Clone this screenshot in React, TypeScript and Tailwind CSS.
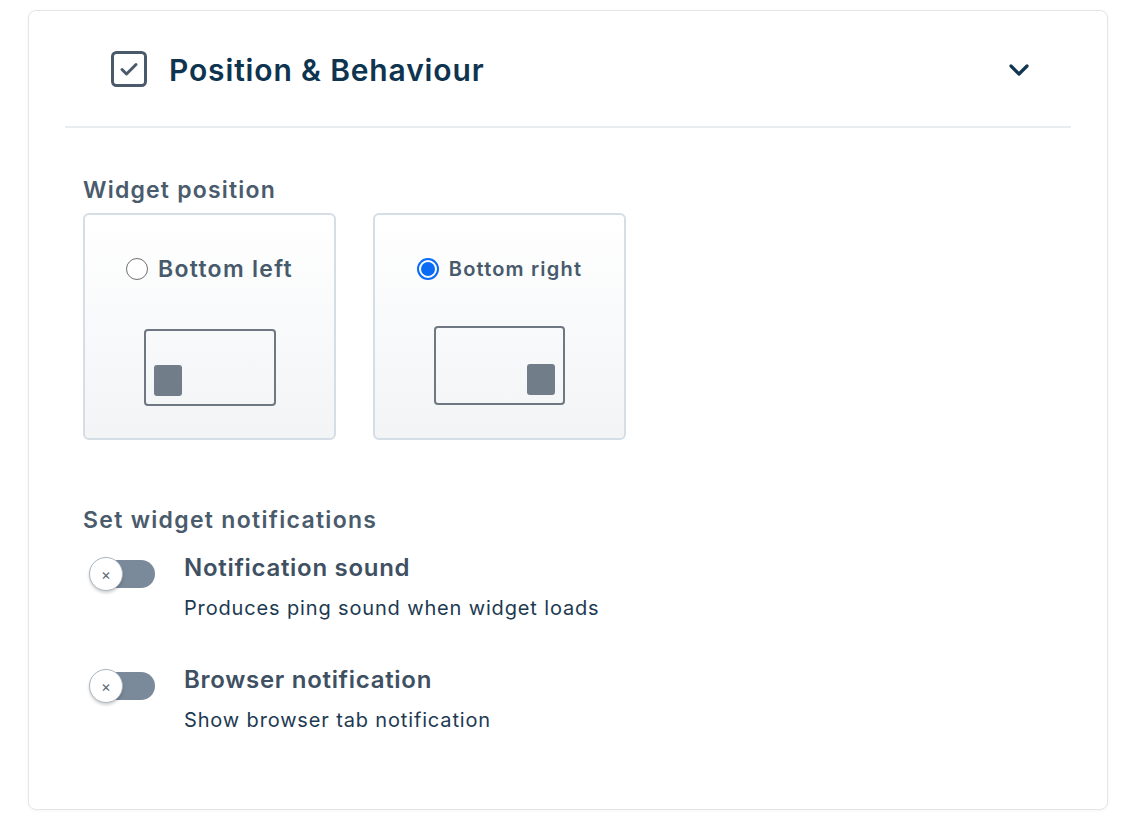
import { useState } from "react";

type Position = "left" | "right";

function CheckboxIcon() {
  return (
    <svg width="36" height="36" viewBox="0 0 36 36" fill="none">
      <rect x="1.5" y="1.5" width="33" height="33" rx="4" stroke="#4a5a6b" strokeWidth="3" />
      <path d="M11 18.5l4.5 4.5 9.5-9.5" stroke="#4a5a6b" strokeWidth="3" strokeLinecap="round" strokeLinejoin="round" />
    </svg>
  );
}

function Chevron() {
  return (
    <svg width="20" height="12" viewBox="0 0 20 12" fill="none">
      <path d="M2 2l8 8 8-8" stroke="#12364f" strokeWidth="3.2" strokeLinecap="round" strokeLinejoin="round" />
    </svg>
  );
}

function PositionCard({
  label,
  side,
  selected,
  onSelect,
  big,
}: {
  label: string;
  side: Position;
  selected: boolean;
  onSelect: () => void;
  big?: boolean;
}) {
  return (
    <button
      onClick={onSelect}
      className="flex h-[227px] w-[253px] flex-col items-center rounded-[6px] border-2 border-[#d5dde5] bg-gradient-to-b from-white to-[#f2f4f6] pt-[40px]"
    >
      <div className="flex items-center gap-[10px]">
        {selected ? (
          <span className="flex h-[22px] w-[22px] items-center justify-center rounded-full border-2 border-[#0a6cf5]">
            <span className="h-[14px] w-[14px] rounded-full bg-[#0a6cf5]" />
          </span>
        ) : (
          <span className="h-[22px] w-[22px] rounded-full border-[1.5px] border-[#6f6f6f] bg-white" />
        )}
        <span
          className={
            big
              ? "text-[23px] leading-[28px] font-semibold tracking-[1.3px] text-[#475a6c]"
              : "text-[20px] leading-[28px] font-semibold tracking-[1.2px] text-[#475a6c]"
          }
        >
          {label}
        </span>
      </div>
      <div
        className={
          side === "left"
            ? "mt-[46px] flex h-[77px] w-[132px] items-end justify-start rounded-[4px] border-2 border-[#6e7782] p-[8px]"
            : "mt-[43px] flex h-[79px] w-[131px] items-end justify-end rounded-[4px] border-2 border-[#6e7782] p-[8px]"
        }
      >
        <div className="h-[31px] w-[28px] rounded-[3px] bg-[#717e8a]" />
      </div>
    </button>
  );
}

function Toggle() {
  return (
    <div className="relative h-[34px] w-[66px] shrink-0">
      <div className="absolute left-[10px] top-[3px] h-[28px] w-[56px] rounded-full bg-[#7a8a9b]" />
      <div className="absolute left-0 top-0 flex h-[34px] w-[34px] items-center justify-center rounded-full border border-[#aab6c2] bg-white shadow-[0_2px_3px_rgba(0,0,0,0.18)]">
        <span className="text-[15px] leading-none text-[#5c6b7a]">×</span>
      </div>
    </div>
  );
}

function NotificationRow({ title, text }: { title: string; text: string }) {
  return (
    <div className="flex items-start">
      <div className="ml-[6px] mt-[3px]">
        <Toggle />
      </div>
      <div className="ml-[29px]">
        <p className="text-[24px] font-semibold leading-[28px] tracking-[0.7px] text-[#3f5063]">{title}</p>
        <p className="mt-[14px] text-[20px] leading-[24px] tracking-[0.85px] text-[#1d3a52]">{text}</p>
      </div>
    </div>
  );
}

export default function App() {
  const [position, setPosition] = useState<Position>("right");

  return (
    <div className="min-h-screen bg-white pl-[28px] pt-[10px] font-['Inter','Noto_Sans',sans-serif]">
      <section className="h-[800px] w-[1080px] rounded-[8px] border border-[#e3e6e8] bg-white shadow-[0_1px_4px_rgba(0,0,0,0.04)]">
        <div className="mx-[36px] flex h-[117px] items-center border-b-2 border-[#e8ecef] pl-[46px] pr-[42px]">
          <CheckboxIcon />
          <h2 className="ml-[22px] mt-[3px] text-[30px] font-semibold tracking-[0.85px] text-[#0f3450]">Position &amp; Behaviour</h2>
          <div className="ml-auto mt-[2px]">
            <Chevron />
          </div>
        </div>

        <div className="px-[54px] pt-[48px]">
          <h3 className="text-[23px] font-semibold leading-[28px] tracking-[1.2px] text-[#4a5b6c]">Widget position</h3>
          <div className="mt-[9px] flex gap-[37px]">
            <PositionCard label="Bottom left" side="left" big selected={position === "left"} onSelect={() => setPosition("left")} />
            <PositionCard label="Bottom right" side="right" selected={position === "right"} onSelect={() => setPosition("right")} />
          </div>

          <h3 className="mt-[66px] text-[23px] font-semibold leading-[28px] tracking-[1.3px] text-[#4a5b6c]">Set widget notifications</h3>
          <div className="mt-[20px] flex flex-col gap-[46px]">
            <NotificationRow title="Notification sound" text="Produces ping sound when widget loads" />
            <NotificationRow title="Browser notification" text="Show browser tab notification" />
          </div>
        </div>
      </section>
    </div>
  );
}
